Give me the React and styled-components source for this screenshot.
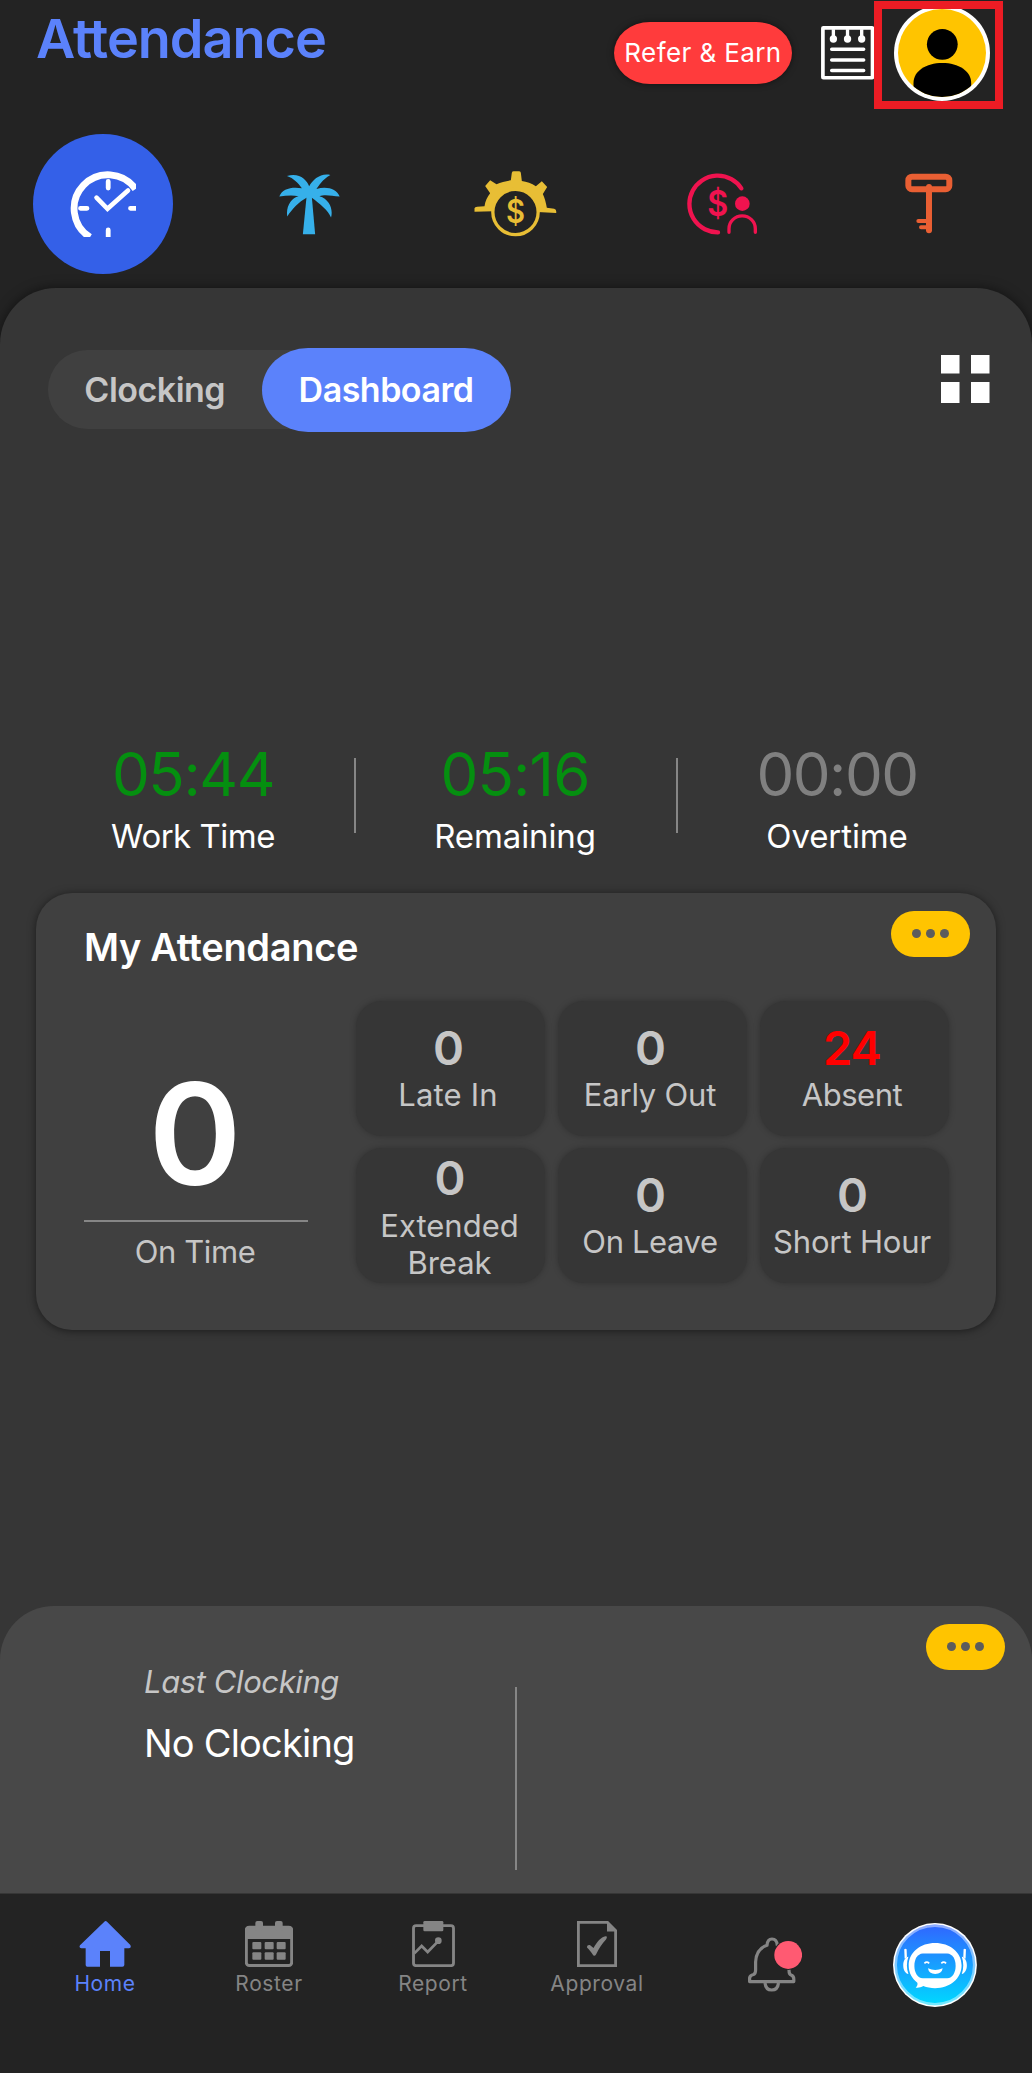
import styled, { createGlobalStyle } from "styled-components";

const Colors = {
  dark: "#232323",
  panel: "#363636",
  card: "#404040",
  sheet: "#484848",
  line: "#868686",
  blue: "#5b82fb",
  yellow: "#ffc400",
  green: "#058f10",
  muted: "#c6c6c6",
  nav: "#858585",
};

/* Icons */
const ClockIcon = () => (
  <svg width="66" height="66" viewBox="0 0 66 66" fill="none" stroke="#fff">
    <path d="M65.5 18A33.8 33.8 0 1 0 20 66.2" strokeWidth="6.8" />
    <g strokeWidth="4.8" strokeLinecap="round">
      <path d="M38.2 10.5V17M38.2 59V70M10.5 37.3H17M60.5 37.3H70" />
      <path d="M26.5 26.6L37.5 37.8L58 19.5" strokeWidth="4.6" />
    </g>
  </svg>
);

const PalmIcon = () => (
  <svg width="61" height="61" viewBox="88 70 184 182" fill="#36b0ea">
    <path d="M171 138L187 138L197 251L160 251Z" />
    <path d="M112 75C150 65 170 85 179 106C190 85 215 65 243 72C218 86 209 104 201 114C235 105 262 115 271 137C245 134 225 130 210 136C240 145 252 175 245 200C235 178 212 160 187 141L171 141C148 153 128 175 113 197C108 168 125 140 147 136C130 133 110 134 89 137C97 113 127 107 157 112C145 95 132 82 112 75Z" />
  </svg>
);

const GearCoinIcon = () => (
  <svg width="83" height="66" viewBox="675 64 248 198" fill="#e8be35">
    <path d="M676 176Q677 172 684 171L706 170C708 155 715 141 723 131L708 109L723 92L742 104C755 98 770 94 785 92L788 69Q789 65 794 65H809Q814 65 815 69L818 94C832 96 848 101 860 110L878 95L894 112L881 133C887 145 890 160 893 174L915 177Q923 179 921 190L865 187A66 66 0 0 0 733 185L676 186Z" />
    <circle cx="799" cy="187" r="68" fill="none" stroke="#e8be35" strokeWidth="10" />
    <Dollar x="799" y="221" fontSize="97" textLength="57" lengthAdjust="spacingAndGlyphs">
      $
    </Dollar>
  </svg>
);

const CommissionIcon = () => (
  <svg width="70" height="62" viewBox="514 520 210 186" fill="#f0134f">
    <g fill="none" stroke="#f0134f" strokeLinecap="round">
      <path d="M677 566A85 85 0 1 0 607 698" strokeWidth="13" />
      <path d="M640 698V687A39 38 0 0 1 719 687V698" strokeWidth="10" />
    </g>
    <circle cx="680" cy="612" r="22" />
    <Dollar x="606" y="650" fontSize="105" textLength="63" lengthAdjust="spacingAndGlyphs">
      $
    </Dollar>
  </svg>
);

const KeyIcon = () => (
  <svg
    width="48"
    height="61.3"
    viewBox="1167 519 144 184"
    fill="none"
    stroke="#e95f33"
    strokeLinecap="round"
  >
    <rect x="1177" y="530" width="123" height="38" rx="11" strokeWidth="18" />
    <path d="M1239 561V691" strokeWidth="18" />
    <path d="M1207 663H1238M1215 682H1238" strokeWidth="12" />
  </svg>
);

const NotepadIcon = () => (
  <svg width="53.4" height="53.6" viewBox="914 78 160 161" stroke="#fff" fill="none">
    <rect x="919.5" y="83.5" width="149" height="150" rx="2" strokeWidth="11" />
    <path d="M951 88V116M993.5 88V116M1036 88V116" strokeWidth="10" />
    <g fill="#fff" stroke="none">
      <circle cx="951" cy="117" r="11" />
      <circle cx="993.5" cy="117" r="11" />
      <circle cx="1036" cy="117" r="11" />
    </g>
    <path d="M946 148H1042M946 180H1042M946 211.5H1042" strokeWidth="10.5" strokeLinecap="round" />
  </svg>
);

const AvatarIcon = () => (
  <svg width="96" height="96" viewBox="0 0 96 96">
    <clipPath id="avatar">
      <circle cx="48" cy="48" r="44" />
    </clipPath>
    <circle cx="48" cy="48" r="48" fill="#fff" />
    <circle cx="48" cy="48" r="44" fill={Colors.yellow} />
    <circle cx="48.3" cy="39.3" r="15.4" />
    <path
      clipPath="url(#avatar)"
      d="M19.5 96V78C19.5 66 32 58 48.3 58S77.2 66 77.2 78V96Z"
    />
  </svg>
);

const TilesIcon = () => (
  <svg width="49" height="48" viewBox="0 0 49 48" fill="#fff">
    <path d="M0 0H18.5V18.5H0ZM30 0H48.5V18.5H30ZM0 27H18.5V48H0ZM30 27H48.5V48H30Z" />
  </svg>
);

const HomeIcon = () => (
  <svg width="52" height="46" viewBox="118 93 156 138" fill={Colors.blue}>
    <path d="M194 95Q198 91 202 95L272 165Q276 175 268 175H254V225Q254 230 248 230H211V183H181V230H143Q138 230 138 225V175H125Q117 174 121 166Z" />
  </svg>
);

const RosterIcon = () => (
  <svg width="48" height="46" viewBox="618 93 144 138" fill={Colors.nav}>
    <rect x="622" y="112" width="136" height="114.5" rx="9" fill="none" stroke={Colors.nav} strokeWidth="9" />
    <path d="M618 147V120Q618 108 630 108H750Q762 108 762 120V147Z" />
    <rect x="649" y="93" width="23" height="30" rx="6" />
    <rect x="708" y="93" width="23" height="30" rx="6" />
    {[640, 677, 713].map((x) => (
      <g key={x}>
        <rect x={x} y="156" width="27" height="22" rx="3" />
        <rect x={x} y="187" width="27" height="22" rx="3" />
      </g>
    ))}
  </svg>
);

const ReportIcon = () => (
  <svg width="43" height="46" viewBox="1119 93 129 138" fill="none" stroke={Colors.nav}>
    <rect x="1123.5" y="107" width="120" height="120" rx="8" strokeWidth="8.5" />
    <rect x="1153" y="93" width="60" height="31" rx="4" fill={Colors.nav} stroke="none" />
    <path d="M1126 190L1148 168L1166 186L1197 154" strokeWidth="8" />
    <circle cx="1198" cy="152" r="10" fill={Colors.nav} stroke="none" />
  </svg>
);

const ApprovalIcon = () => (
  <svg width="40" height="46" viewBox="0 0 40 46" fill={Colors.nav}>
    <path d="M1.4 1.4H30.5L38.6 9.5V44.6H1.4Z" fill="none" stroke={Colors.nav} strokeWidth="2.8" />
    <path d="M30 1V10.5H39.5Z" />
    <path d="M10 26.5C10 24 12 23.5 13.5 24.5L16.5 27C20 21 24 16 28.5 15.3C30.5 15.3 30 17 29 18.5C25.5 22 22 27 19 33.5C18 35.3 16.5 35.3 15.7 33.5C14 30.5 12 28.5 10 26.5Z" />
  </svg>
);

const BellIcon = () => (
  <svg width="54" height="55" viewBox="0 0 54 55" fill="none" stroke={Colors.nav} strokeWidth="3.2">
    <path
      strokeLinejoin="round"
      d="M1.6 44.6V41C1.8 39.3 3 38 5.5 37.5C7.3 36.8 7.6 35.5 7.6 33V25C8 16 12 10.5 19 8.3C19.3 4 21 2 24 2C27 2 29 4 29.3 8.3L38 14L41 33C41 36 41.5 37.6 43 38C45 38.7 45.8 40 45.8 42V44.6Z"
    />
    <path d="M17 46C17.5 50.5 20 53 23.7 53S30 50.5 30.5 46" />
    <circle cx="40.2" cy="18" r="15" fill={Colors.dark} stroke="none" />
    <circle cx="40.2" cy="18" r="13.9" fill="#ff5a72" stroke="none" />
  </svg>
);

const BotIcon = () => (
  <svg width="84" height="84" viewBox="0 0 84.5 84.5" fill="#fff">
    <linearGradient id="bot" gradientUnits="userSpaceOnUse" x1="0" y1="2" x2="0" y2="82">
      <stop offset="0" stopColor="#3066ff" />
      <stop offset="1" stopColor="#00d8ff" />
    </linearGradient>
    <circle cx="42.2" cy="42.2" r="42.2" />
    <circle cx="42.2" cy="42.2" r="40.6" fill="url(#bot)" />
    <circle cx="42.2" cy="42.2" r="39.5" fill="none" stroke="#fff" strokeOpacity=".45" strokeWidth="2.6" />
    <path d="M42.3 20C57 20 69 29 69 42.5S57 65.6 42.3 65.6C38 65.6 34 65 30.5 63.5C28 65 25 65.5 22.8 65C24.5 63.5 25 61.5 24.5 60C19 56 15.8 50 15.8 42.5C15.8 29 28 20 42.3 20Z" />
    <path
      fill="url(#bot)"
      d="M30 30.7H54.5C60 31 63 36.5 63 43S60 55.5 54.5 55.7H30C24.5 55.5 21.5 49.5 21.5 43S24.5 31 30 30.7Z"
    />
    <path d="M15.5 34C12 34.5 10.3 38.5 10.3 42.7S12 50.5 15.5 51.3C13.5 46 13.5 39.5 15.5 34ZM69.2 34C72.5 34.5 74.3 38.5 74.3 42.7S72.5 50.5 69.2 51.3C71.2 46 71.2 39.5 69.2 34Z" />
    <path d="M11.3 26.5Q12.5 25.3 13.7 26.5L14 34.5L11.7 36ZM71 26.5Q72.2 25.3 73.4 26.5L73 36L70.7 34.5Z" />
    <path d="M35.2 45.6Q42.5 49 50 45.6Q49 51.3 42.5 51.3T35.2 45.6Z" />
    <path d="M31.6 40.6Q34 38.2 36.4 40.6M48.6 40.6Q51 38.2 53.4 40.6" fill="none" stroke="#fff" strokeWidth="1.7" />
  </svg>
);

const tabs = [
  { icon: ClockIcon, active: true },
  { icon: PalmIcon },
  { icon: GearCoinIcon },
  { icon: CommissionIcon },
  { icon: KeyIcon },
];

const stats = [
  { time: "05:44", label: "Work Time", track: -1.4, labelTrack: -0.5 },
  { time: "05:16", label: "Remaining", track: -0.8, labelTrack: -0.1 },
  { time: "00:00", label: "Overtime", track: -1.5, labelTrack: -0.1, off: true },
];

const tiles = [
  { value: 0, label: "Late In", track: 0.2 },
  { value: 0, label: "Early Out", track: -0.2 },
  { value: 24, label: "Absent", track: -0.5, alert: true },
  { value: 0, label: "Extended Break", track: 0, tall: true },
  { value: 0, label: "On Leave", track: -0.4 },
  { value: 0, label: "Short Hour", track: -0.15 },
];

const navItems = [
  { label: "Home", icon: HomeIcon, active: true },
  { label: "Roster", icon: RosterIcon },
  { label: "Report", icon: ReportIcon },
  { label: "Approval", icon: ApprovalIcon },
];

const MoreButton = () => (
  <More>
    <Dot />
    <Dot />
    <Dot />
  </More>
);

const App = () => {
  return (
    <Screen>
      <GlobalStyle />
      <Header>
        <Title>Attendance</Title>
        <ReferButton>Refer &amp; Earn</ReferButton>
        <Notes>
          <NotepadIcon />
        </Notes>
        <Profile>
          <AvatarIcon />
        </Profile>
      </Header>

      <Tabs>
        {tabs.map(({ icon: Icon, active }, i) => (
          <Tab key={i} $active={active}>
            <Icon />
          </Tab>
        ))}
      </Tabs>

      <Panel>
        <Toolbar>
          <Segment>
            <SegmentItem>Clocking</SegmentItem>
            <SegmentItem $active>Dashboard</SegmentItem>
          </Segment>
          <Layout>
            <TilesIcon />
          </Layout>
        </Toolbar>

        <Stats>
          {stats.map((stat) => (
            <Stat key={stat.label}>
              <Time $off={stat.off} $track={stat.track}>
                {stat.time}
              </Time>
              <StatLabel $track={stat.labelTrack}>{stat.label}</StatLabel>
            </Stat>
          ))}
        </Stats>

        <Card>
          <CardHead>
            <CardTitle>My Attendance</CardTitle>
            <MoreButton />
          </CardHead>
          <CardBody>
            <OnTime>
              <OnTimeValue>0</OnTimeValue>
              <OnTimeLabel>On Time</OnTimeLabel>
            </OnTime>
            <TileGrid>
              {tiles.map((tile) => (
                <Tile key={tile.label} $tall={tile.tall}>
                  <TileValue $alert={tile.alert}>{tile.value}</TileValue>
                  <TileLabel $track={tile.track}>{tile.label}</TileLabel>
                </Tile>
              ))}
            </TileGrid>
          </CardBody>
        </Card>

        <Sheet>
          <SheetLeft>
            <SheetCaption>Last Clocking</SheetCaption>
            <SheetText>No Clocking</SheetText>
          </SheetLeft>
          <SheetDivider />
          <SheetRight>
            <MoreButton />
          </SheetRight>
        </Sheet>
      </Panel>

      <Nav>
        {navItems.map(({ label, icon: Icon, active }) => (
          <NavItem key={label} $active={active}>
            <Icon />
            <NavLabel>{label}</NavLabel>
          </NavItem>
        ))}
        <BellItem>
          <BellIcon />
        </BellItem>
        <BotItem>
          <BotIcon />
        </BotItem>
      </Nav>
    </Screen>
  );
};

export default App;

const GlobalStyle = createGlobalStyle`
  * {
    box-sizing: border-box;
  }
  body {
    margin: 0;
    background-color: ${Colors.dark};
    font-family: "Inter", "Liberation Sans", sans-serif;
  }
  h1, h2, p {
    margin: 0;
    font-weight: 400;
  }
  svg {
    display: block;
    flex-shrink: 0;
  }
  button {
    border: none;
    padding: 0;
    font-family: inherit;
  }
`;

const Dollar = styled.text`
  font-family: "Inter", sans-serif;
  font-weight: 600;
  text-anchor: middle;
`;

const Screen = styled.div`
  display: flex;
  flex-direction: column;
  width: 1032px;
  height: 2073px;
  overflow: hidden;
  background-color: ${Colors.dark};
`;

const Header = styled.header`
  display: flex;
  align-items: flex-start;
  height: 134px;
  padding: 1px 29px 0 36px;
`;

const Title = styled.h1`
  flex: 1;
  margin-top: 7px;
  color: ${Colors.blue};
  font-size: 54px;
  font-weight: 600;
  line-height: 61px;
  letter-spacing: -1px;
`;

const ReferButton = styled.button`
  width: 178px;
  height: 62px;
  margin-top: 21px;
  padding-bottom: 2px;
  border-radius: 36px / 31px;
  background-color: #ff3b3c;
  box-shadow: 0 0 6px rgba(0, 0, 0, 0.5);
  color: #fff;
  font-size: 26px;
  letter-spacing: 0.4px;
`;

const Notes = styled.div`
  width: 53px;
  margin: 25px 0 0 29px;
`;

const Profile = styled.div`
  display: flex;
  align-items: flex-start;
  width: 129px;
  height: 108px;
  overflow: hidden;
  border: 8px solid #ec1c24;

  svg {
    margin: -4px 0 0 12px;
  }
`;

const Tabs = styled.div`
  display: grid;
  grid-template-columns: repeat(5, 1fr);
  justify-items: center;
  height: 154px;
`;

const Tab = styled.div`
  display: flex;
  align-items: center;
  justify-content: center;
  width: 140px;
  height: 140px;
  border-radius: 50%;
  background-color: ${({ $active }) => ($active ? "#3460e8" : "transparent")};
`;

const Panel = styled.main`
  display: flex;
  flex-direction: column;
  height: 1605px;
  border-radius: 56px 56px 0 0;
  background-color: ${Colors.panel};
  box-shadow: 0 0 12px rgba(0, 0, 0, 0.5);
`;

const Toolbar = styled.div`
  display: flex;
  align-items: flex-start;
  justify-content: space-between;
  padding: 62px 42px 0 48px;
`;

const Segment = styled.div`
  display: flex;
  align-items: center;
  height: 79px;
  border-radius: 42px;
  background-color: ${Colors.card};
`;

const SegmentItem = styled.div`
  display: flex;
  align-items: center;
  justify-content: center;
  width: ${({ $active }) => ($active ? "249px" : "213.5px")};
  height: 84px;
  border-radius: 46px / 42px;
  background-color: ${({ $active }) => ($active ? Colors.blue : "transparent")};
  color: ${({ $active }) => ($active ? "#fff" : Colors.muted)};
  font-size: 34px;
  font-weight: 600;
  letter-spacing: -0.5px;
`;

const Layout = styled.div`
  margin-top: 5px;
`;

const Stats = styled.div`
  display: flex;
  margin-top: 315px;
  padding: 0 33px;
`;

const Stat = styled.div`
  display: flex;
  flex: 1;
  flex-direction: column;
  align-items: center;
  gap: 12px;

  & + &::before {
    content: "";
    align-self: flex-start;
    width: 2px;
    height: 75px;
    margin: 14px 0 -101px -1px;
    background-color: ${Colors.line};
  }
`;

const Time = styled.p`
  padding-right: 2px;
  color: ${({ $off }) => ($off ? "#808080" : Colors.green)};
  font-size: 60px;
  line-height: 60px;
  letter-spacing: ${({ $track }) => $track}px;
`;

const StatLabel = styled.p`
  padding-right: 2px;
  color: #fff;
  font-size: 33px;
  line-height: 40px;
  letter-spacing: ${({ $track }) => $track}px;
`;

const Card = styled.section`
  height: 437px;
  margin: 37px 36px 0;
  border-radius: 36px;
  background-color: ${Colors.card};
  box-shadow: 0 1px 8px rgba(0, 0, 0, 0.5);
`;

const CardHead = styled.div`
  display: flex;
  align-items: flex-start;
  justify-content: space-between;
  height: 107px;
  padding: 18px 26px 0 48px;
`;

const CardTitle = styled.h2`
  margin-top: 13px;
  color: #fff;
  font-size: 38px;
  font-weight: 600;
  line-height: 46px;
  letter-spacing: -0.33px;
`;

const More = styled.button`
  display: flex;
  align-items: center;
  justify-content: center;
  gap: 5px;
  width: 79px;
  height: 46px;
  padding-bottom: 1px;
  border-radius: 23px;
  background-color: ${Colors.yellow};
`;

const Dot = styled.span`
  width: 9px;
  height: 9px;
  border-radius: 50%;
  background-color: #5c5c5c;
`;

const CardBody = styled.div`
  display: flex;
  gap: 48px;
  padding-left: 48px;
`;

const OnTime = styled.div`
  width: 224px;
  padding-top: 63px;
  text-align: center;
`;

const OnTimeValue = styled.p`
  padding: 0 2px 16px 0;
  border-bottom: 2px solid ${Colors.line};
  color: #fff;
  font-size: 141px;
  font-weight: 600;
  line-height: 141px;
`;

const OnTimeLabel = styled.p`
  margin-top: 11px;
  padding-right: 2px;
  color: ${Colors.muted};
  font-size: 31px;
  line-height: 37px;
  letter-spacing: -0.4px;
`;

const TileGrid = styled.div`
  display: grid;
  grid-template-columns: repeat(3, 189px);
  grid-auto-rows: 135px;
  gap: 12px 13px;
  margin-top: 1px;
`;

const Tile = styled.div`
  display: flex;
  flex-direction: column;
  align-items: center;
  justify-content: center;
  padding: ${({ $tall }) => ($tall ? "3px 18px 0 16px" : "0 5px 1px 0")};
  border-radius: 26px;
  background-color: ${Colors.panel};
  box-shadow: 0 0 6px rgba(0, 0, 0, 0.25);
`;

const TileValue = styled.p`
  margin-bottom: 4.5px;
  color: ${({ $alert }) => ($alert ? "#ff0000" : Colors.muted)};
  font-size: 47px;
  font-weight: 600;
  line-height: 49px;
  letter-spacing: -1px;
`;

const TileLabel = styled.p`
  color: ${Colors.muted};
  font-size: 31px;
  line-height: 37px;
  letter-spacing: ${({ $track }) => $track}px;
  text-align: center;
`;

const Sheet = styled.section`
  display: flex;
  height: 287px;
  margin-top: auto;
  border-radius: 54px 54px 0 0;
  background-color: ${Colors.sheet};
`;

const SheetLeft = styled.div`
  width: 515px;
  padding: 57px 0 0 144px;
`;

const SheetCaption = styled.p`
  color: ${Colors.muted};
  font-size: 31px;
  font-style: italic;
  line-height: 37px;
  letter-spacing: -0.4px;
`;

const SheetText = styled.p`
  margin-top: 20px;
  color: #fff;
  font-size: 38px;
  line-height: 46px;
  letter-spacing: -0.8px;
`;

const SheetDivider = styled.div`
  width: 2px;
  height: 183px;
  margin-top: 81px;
  background-color: ${Colors.line};
`;

const SheetRight = styled.div`
  display: flex;
  flex: 1;
  align-items: flex-start;
  justify-content: flex-end;
  padding: 18px 27px 0 0;
`;

const Nav = styled.nav`
  display: flex;
  align-items: flex-start;
  height: 180px;
  padding-left: 23px;
  border-top: 1px solid #363636;
  background-color: ${Colors.dark};
  z-index: 1;
`;

const NavItem = styled.div`
  display: flex;
  flex-direction: column;
  align-items: center;
  width: 164px;
  padding-top: 27px;
  color: ${({ $active }) => ($active ? Colors.blue : Colors.nav)};
`;

const NavLabel = styled.span`
  margin-top: 4px;
  font-size: 21px;
  line-height: 26px;
  letter-spacing: 0.6px;
`;

const BellItem = styled.div`
  display: flex;
  justify-content: center;
  width: 192px;
  padding-top: 43px;
`;

const BotItem = styled.div`
  display: flex;
  justify-content: center;
  width: 128px;
  padding-top: 29px;
`;
